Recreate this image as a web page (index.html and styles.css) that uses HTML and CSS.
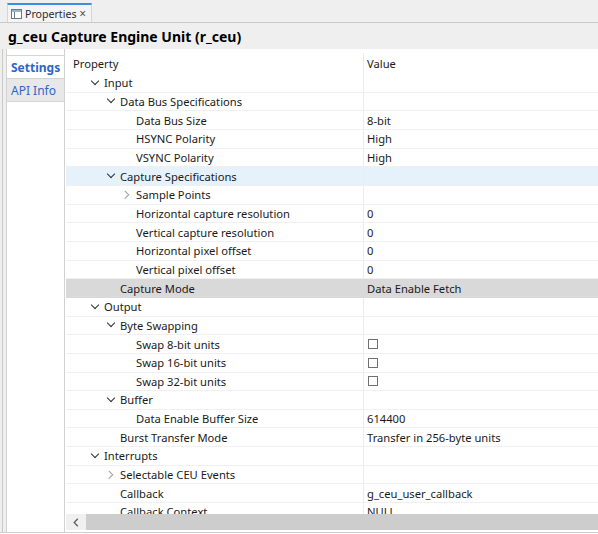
FILE: index.html
```html
<!DOCTYPE html>
<html>
<head>
<meta charset="utf-8">
<link rel="stylesheet" href="styles.css">
</head>
<body>
<div class="view">
  <div class="tabbar">
    <div class="tab">
      <svg class="tab-icon" width="11" height="10" viewBox="0 0 11 10"><rect x="0.5" y="0.5" width="10" height="9" fill="#fff" stroke="#6a7a8c"/><rect x="1" y="1" width="9" height="2" fill="#9fb3c8"/><line x1="3.5" y1="3" x2="3.5" y2="9" stroke="#6a7a8c"/></svg>
      <span class="tab-label">Properties</span>
      <span class="tab-close">×</span>
    </div>
  </div>
  <div class="titlebar">g_ceu Capture Engine Unit (r_ceu)</div>
  <div class="main">
    <div class="gutter"></div>
    <div class="sidebar">
      <div class="stab active">Settings</div>
      <div class="stab">API Info</div>
    </div>
    <div class="content">
      <div class="tree">
        <div class="row head"><div class="cprop">Property</div><div class="cval">Value</div></div>

        <div class="row"><div class="cprop l0"><span class="tg down"></span>Input</div><div class="cval"></div></div>
        <div class="row"><div class="cprop l1"><span class="tg down"></span>Data Bus Specifications</div><div class="cval"></div></div>
        <div class="row"><div class="cprop l2"><span class="tg"></span>Data Bus Size</div><div class="cval">8-bit</div></div>
        <div class="row"><div class="cprop l2"><span class="tg"></span>HSYNC Polarity</div><div class="cval">High</div></div>
        <div class="row"><div class="cprop l2"><span class="tg"></span>VSYNC Polarity</div><div class="cval">High</div></div>
        <div class="row sel"><div class="cprop l1"><span class="tg down"></span>Capture Specifications</div><div class="cval"></div></div>
        <div class="row"><div class="cprop l2"><span class="tg right"></span>Sample Points</div><div class="cval"></div></div>
        <div class="row"><div class="cprop l2"><span class="tg"></span>Horizontal capture resolution</div><div class="cval">0</div></div>
        <div class="row"><div class="cprop l2"><span class="tg"></span>Vertical capture resolution</div><div class="cval">0</div></div>
        <div class="row"><div class="cprop l2"><span class="tg"></span>Horizontal pixel offset</div><div class="cval">0</div></div>
        <div class="row"><div class="cprop l2"><span class="tg"></span>Vertical pixel offset</div><div class="cval">0</div></div>
        <div class="row hover"><div class="cprop l1"><span class="tg"></span>Capture Mode</div><div class="cval">Data Enable Fetch</div></div>
        <div class="row"><div class="cprop l0"><span class="tg down"></span>Output</div><div class="cval"></div></div>
        <div class="row"><div class="cprop l1"><span class="tg down"></span>Byte Swapping</div><div class="cval"></div></div>
        <div class="row"><div class="cprop l2"><span class="tg"></span>Swap 8-bit units</div><div class="cval"><span class="chk"></span></div></div>
        <div class="row"><div class="cprop l2"><span class="tg"></span>Swap 16-bit units</div><div class="cval"><span class="chk"></span></div></div>
        <div class="row"><div class="cprop l2"><span class="tg"></span>Swap 32-bit units</div><div class="cval"><span class="chk"></span></div></div>
        <div class="row"><div class="cprop l1"><span class="tg down"></span>Buffer</div><div class="cval"></div></div>
        <div class="row"><div class="cprop l2"><span class="tg"></span>Data Enable Buffer Size</div><div class="cval">614400</div></div>
        <div class="row"><div class="cprop l1"><span class="tg"></span>Burst Transfer Mode</div><div class="cval">Transfer in 256-byte units</div></div>
        <div class="row"><div class="cprop l0"><span class="tg down"></span>Interrupts</div><div class="cval"></div></div>
        <div class="row"><div class="cprop l1"><span class="tg right"></span>Selectable CEU Events</div><div class="cval"></div></div>
        <div class="row"><div class="cprop l1"><span class="tg"></span>Callback</div><div class="cval">g_ceu_user_callback</div></div>
        <div class="row"><div class="cprop l1"><span class="tg"></span>Callback Context</div><div class="cval">NULL</div></div>
      </div>
      <div class="hscroll">
        <div class="arrow"><svg width="6" height="9" viewBox="0 0 6 9"><path d="M4.8 0.8 L1.2 4.5 L4.8 8.2" fill="none" stroke="#606060" stroke-width="1.3"/></svg></div>
        <div class="thumb"></div>
      </div>
    </div>
  </div>
</div>
</body>
</html>
```
FILE: styles.css
```css
html, body {
  margin: 0;
  padding: 0;
  background: #ffffff;
}
body {
  width: 598px;
  height: 534px;
  overflow: hidden;
  font-family: "Noto Sans", "Open Sans", sans-serif;
  font-size: 11.2px;
  color: #1a1a1a;
}
.view {
  display: flex;
  flex-direction: column;
  height: 534px;
}
.tabbar {
  height: 22px;
  background: #efefef;
  border-bottom: 1px solid #c9c9c9;
  display: flex;
  align-items: flex-end;
  padding-left: 7px;
}
.tab {
  height: 19px;
  border-top: 2px solid #3d8ee2;
  border-left: 1px solid #d6d6d6;
  border-right: 1px solid #d6d6d6;
  background: #f4f4f4;
  display: flex;
  align-items: center;
  padding: 0 5px 0 3px;
  width: 85px;
  box-sizing: border-box;
}
.tab-icon { margin-right: 3px; flex: none; }
.tab-label { color: #2b2b2b; font-size: 10.6px; }
.tab-close { margin-left: auto; color: #555; font-size: 12px; }
.titlebar {
  height: 26px;
  background: #efefef;
  font-weight: bold;
  font-size: 14px;
  color: #000;
  padding-left: 8px;
  display: flex;
  align-items: center;
  padding-top: 1px;
  box-sizing: border-box;
}
.main {
  flex: 1;
  display: flex;
  min-height: 0;
  border-bottom: 1px solid #cfcfcf;
  margin-bottom: 1px;
}
.gutter {
  width: 6px;
  background: linear-gradient(to right, #efefef 2px, #c9c9c9 2px, #c9c9c9 3px, #efefef 3px);
  border-right: 1px solid #d2d2d2;
}
.sidebar {
  width: 57px;
  border-right: 1px solid #d2d2d2;
  padding-top: 6px;
  background: #fff;
}
.stab {
  height: 22px;
  line-height: 24px;
  padding-left: 4px;
  color: #2a68c8;
  font-size: 12px;
  border-top: 1px solid #d4d4d4;
  background: #e8e8e8;
  border-bottom: 1px solid #d4d4d4;
}
.stab.active {
  background: #fff;
  font-weight: bold;
  border-bottom: none;
}
.content {
  flex: 1;
  display: flex;
  flex-direction: column;
  min-width: 0;
  padding-top: 4px;
  padding-bottom: 2px;
}
.tree {
  flex: 1;
  overflow: hidden;
  padding-left: 1px;
}
.row {
  display: flex;
  height: 18.667px;
  box-sizing: border-box;
  border-bottom: 1px solid #f0f0f0;
  align-items: center;
  white-space: nowrap;
}
.row.head {
  height: 21px;
  border-bottom: none;
}
.row.sel { background: #e5f1fb; }
.row.hover { background: #d9d9d9; border-bottom-color: #d9d9d9; }
.cprop {
  width: 298px;
  flex: none;
  height: 100%;
  box-sizing: border-box;
  border-right: 1px solid #ececec;
  display: flex;
  align-items: center;
  padding-left: 22px;
}
.row.hover .cprop { border-right-color: #d9d9d9; }
.row.head .cprop { padding-left: 7px; }
.cval {
  flex: 1;
  padding-left: 3px;
  display: flex;
  align-items: center;
  height: 100%;
}
.cprop.l1 { padding-left: 38px; }
.cprop.l2 { padding-left: 54px; }
.tg {
  width: 16px;
  height: 10px;
  flex: none;
  position: relative;
}
.tg.down::before {
  content: "";
  position: absolute;
  left: 3.5px;
  top: 0px;
  width: 5px;
  height: 5px;
  border-right: 1.6px solid #2e2e2e;
  border-bottom: 1.6px solid #2e2e2e;
  transform: rotate(45deg);
}
.tg.right::before {
  content: "";
  position: absolute;
  left: 1.5px;
  top: 2px;
  width: 4.5px;
  height: 4.5px;
  border-right: 1.5px solid #a0a0a0;
  border-bottom: 1.5px solid #a0a0a0;
  transform: rotate(-45deg);
}
.chk {
  width: 8px;
  height: 8px;
  border: 1px solid #707070;
  background: #fff;
  margin-left: 1px;
}
.hscroll {
  height: 16px;
  flex: none;
  background: #f0f0f0;
  display: flex;
  margin-left: 1px;
}
.arrow {
  width: 20px;
  display: flex;
  align-items: center;
  justify-content: center;
}
.thumb {
  flex: 1;
  background: #cdcdcd;
}
```
